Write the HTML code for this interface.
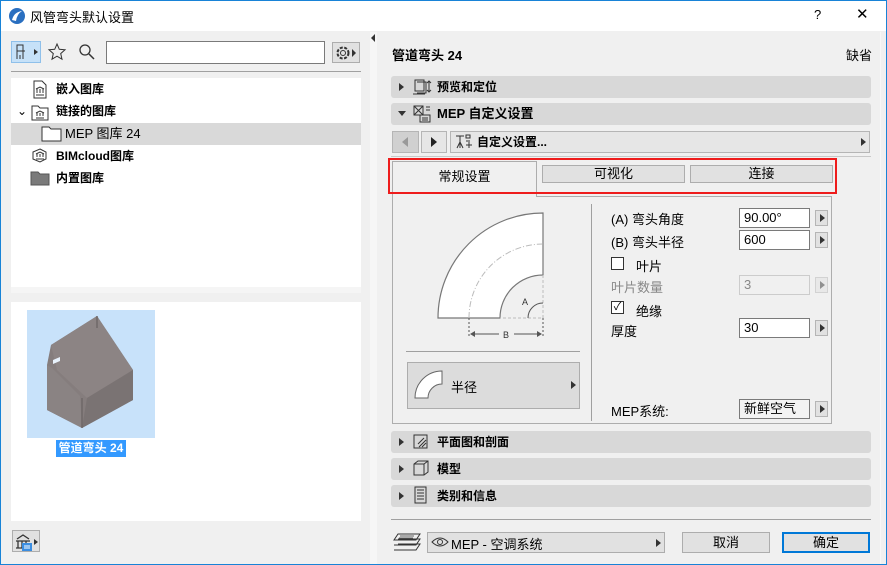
<!DOCTYPE html>
<html><head><meta charset="utf-8"><style>
*{box-sizing:border-box;margin:0;padding:0}
body{width:887px;height:565px;overflow:hidden;background:#f0f0f0;font-family:"Liberation Sans","Noto Sans CJK SC",sans-serif;font-size:12px;color:#000;position:relative}
.a{position:absolute}
.win{left:0;top:0;width:887px;height:565px;border:1px solid #1883d7}
.bar{left:1px;top:1px;width:885px;height:30px;background:#fff}
.sec{background:#d8d8d8;border-radius:3px;height:22px;font-weight:bold;font-size:12px;line-height:22px}
.tri{width:0;height:0;border-top:4px solid transparent;border-bottom:4px solid transparent;border-left:5px solid #333}
.inp{background:#fff;border:1px solid #7a7a7a;height:20px;line-height:18px;padding-left:4px;font-size:13px}
.ab{width:13px;height:16px;background:#e1e1e1;border:1px solid #b5b5b5}
.ab:after{content:"";position:absolute;left:4px;top:3px;border-top:4px solid transparent;border-bottom:4px solid transparent;border-left:5px solid #333}
.btn{background:#e1e1e1;border:1px solid #adadad;text-align:center;line-height:19px;font-size:12px}
.tree div{position:absolute;left:0;height:22px;line-height:22px;font-weight:bold}
</style></head><body>
<div class="a win"></div>
<div class="a bar"></div>
<svg class="a" style="left:8px;top:7px" width="18" height="18"><circle cx="9" cy="9" r="8" fill="#2a6fc0"/><path d="M4 13 Q6 5 14 4 Q9 7 8 14Z" fill="#fff"/></svg>
<div class="a" style="left:30px;top:7px;font-size:13px">风管弯头默认设置</div>
<div class="a" style="left:814px;top:7px;font-size:13px">?</div>
<div class="a" style="left:856px;top:5px;font-size:15px">✕</div>

<!-- left toolbar -->
<div class="a" style="left:11px;top:41px;width:30px;height:22px;background:#c6e1f8;border:1px solid #8fc0ea"></div>
<svg class="a" style="left:14px;top:43px" width="26" height="18"><path d="M3 2h6v6h-6zM3 8v8M9 8v8M3 8h8M6 12v4" stroke="#333" fill="none"/><path d="M20 6l4 3-4 3z" fill="#333"/></svg>
<svg class="a" style="left:47px;top:42px" width="20" height="20"><path d="M10 2l2.3 5.3 5.7.5-4.3 3.8 1.3 5.6-5-3-5 3 1.3-5.6L2 7.8l5.7-.5z" stroke="#333" fill="none"/></svg>
<svg class="a" style="left:78px;top:43px" width="18" height="18"><circle cx="7" cy="7" r="5" stroke="#333" fill="none" stroke-width="1.3"/><path d="M11 11l5 5" stroke="#333" stroke-width="1.5"/></svg>
<div class="a" style="left:106px;top:41px;width:219px;height:23px;background:#fff;border:1px solid #7a7a7a"></div>
<div class="a" style="left:332px;top:42px;width:28px;height:21px;background:#e1e1e1;border:1px solid #adadad"></div>
<svg class="a" style="left:334px;top:44px" width="24" height="18"><circle cx="9" cy="9" r="5.5" stroke="#333" fill="none" stroke-dasharray="3 1.5" stroke-width="2"/><circle cx="9" cy="9" r="2.5" stroke="#333" fill="none"/><path d="M18 5l4 4-4 4z" fill="#333"/></svg>
<div class="a" style="left:11px;top:71px;width:350px;height:1px;background:#a0a0a0"></div>

<!-- tree -->
<div class="a tree" style="left:11px;top:78px;width:350px;height:209px;background:#fff">
 <div style="top:0;left:0;width:350px"><span style="position:absolute;left:45px">嵌入图库</span></div>
 <div style="top:22px;left:0;width:350px"><span style="position:absolute;left:6px;font-weight:normal">⌄</span><span style="position:absolute;left:45px">链接的图库</span></div>
 <div style="top:45px;left:0;width:350px;height:22px;background:#d9d9d9;font-weight:normal;font-size:13px"><span style="position:absolute;left:54px">MEP 图库 24</span></div>
 <div style="top:67px;left:0;width:350px"><span style="position:absolute;left:45px">BIMcloud图库</span></div>
 <div style="top:89px;left:0;width:350px"><span style="position:absolute;left:45px">内置图库</span></div>
</div>
<svg class="a" style="left:30px;top:80px" width="20" height="120">
 <path d="M4 1h8l4 4v13H4z" stroke="#333" fill="#fff"/><path d="M6 15h8M7 13V9M10 13V9M13 13V9M6 9l4-2 4 2" stroke="#333" fill="none"/>
 <path d="M2 26h6l2 2h8v12H2z" stroke="#333" fill="#fff"/><path d="M6 38h8M7 36v-3M10 36v-3M13 36v-3M6 33l4-2 4 2" stroke="#333" fill="none"/>
 <path d="M10 69l6 3v7l-6 3-7-3v-7z" stroke="#333" fill="#fff"/><path d="M6 79h8M7 77v-3M10 77v-3M13 77v-3M6 74l4-2 4 2" stroke="#333" fill="none"/>
 <path d="M1 92h7l2 2h9v11H1z" fill="#7a7a7a" stroke="#555"/>
</svg>
<svg class="a" style="left:41px;top:126px" width="22" height="16"><path d="M1 1h7l2 2h10v12H1z" stroke="#333" fill="#fff"/></svg>

<div class="a" style="left:11px;top:287px;width:350px;height:6px;background:#f5f5f5"></div>
<div class="a" style="left:11px;top:302px;width:350px;height:219px;background:#fff"></div>
<div class="a" style="left:27px;top:310px;width:128px;height:128px;background:#c8e2fa"></div>
<svg class="a" style="left:27px;top:310px" width="128" height="128">
 <path d="M24 35L70 6 106 60 106 90 55 118 20 100 20 55Z" fill="#857d7d"/>
 <path d="M24 35L70 6 106 60 60 88 30 60Z" fill="#8c8484"/>
 <path d="M60 88L106 60 106 90 55 118Z" fill="#7a7373"/>
 <path d="M20 55l5 3 28 28 2 32-35-18z" fill="#8a8383"/>
 <path d="M26 50l7-3v4l-7 3z" fill="#e8f2fc"/>
 <path d="M70 6v12M55 88v30" stroke="#6f6868" stroke-width="1.5"/>
</svg>
<div class="a" style="left:56px;top:440px;width:70px;height:17px;background:#3399ff;color:#fff;font-weight:bold;font-size:12px;line-height:17px;text-align:center">管道弯头 24</div>
<div class="a" style="left:12px;top:530px;width:28px;height:22px;background:#e1e1e1;border:1px solid #adadad"></div>
<svg class="a" style="left:14px;top:532px" width="26" height="20"><path d="M2 9h14M3 7l6-4 6 4M4 9v7M8 9v7M12 9v7M2 16h12" stroke="#333" fill="none" stroke-width="1.3"/><rect x="8" y="11" width="10" height="8" fill="#3b8de0"/><path d="M10 14h6M10 16h6" stroke="#fff"/><path d="M20 7l4 3-4 3z" fill="#333"/></svg>

<!-- divider -->
<div class="a" style="left:370px;top:32px;width:7px;height:532px;background:#f6f6f6"></div>
<div class="a" style="left:371px;top:34px;border-top:4px solid transparent;border-bottom:4px solid transparent;border-right:4px solid #333"></div>
<div class="a" style="left:880px;top:32px;width:1px;height:532px;background:#f7f7f7"></div>

<!-- right -->
<div class="a" style="left:392px;top:45px;font-weight:bold;font-size:13px">管道弯头 24</div>
<div class="a" style="left:846px;top:45px;font-size:13px">缺省</div>
<div class="a sec" style="left:391px;top:76px;width:480px"></div>
<div class="a tri" style="left:399px;top:83px"></div>
<svg class="a" style="left:412px;top:78px" width="20" height="18"><path d="M3 2h9v11H3zM5 4h9v11H5M1 16h12" stroke="#333" fill="none"/><path d="M17 3v11M15 5l2-2 2 2M15 12l2 2 2-2" stroke="#333" fill="none"/></svg>
<div class="a" style="left:437px;top:76px;line-height:22px;font-weight:bold">预览和定位</div>
<div class="a sec" style="left:391px;top:103px;width:480px"></div>
<div class="a" style="left:398px;top:111px;border-left:4px solid transparent;border-right:4px solid transparent;border-top:5px solid #333"></div>
<svg class="a" style="left:412px;top:104px" width="20" height="20"><path d="M2 2h9v9H2zM2 2l9 9M11 2l-9 9" stroke="#333" fill="none"/><path d="M8 11h10v7H8zM10 14h6M10 16h6M14 3h4M14 6h4" stroke="#333" fill="none"/></svg>
<div class="a" style="left:437px;top:103px;line-height:22px;font-weight:bold;font-size:13px">MEP 自定义设置</div>

<div class="a" style="left:392px;top:131px;width:27px;height:22px;background:#d0d0d0;border:1px solid #b5b5b5"></div>
<div class="a" style="left:402px;top:137px;border-top:5px solid transparent;border-bottom:5px solid transparent;border-right:6px solid #999"></div>
<div class="a" style="left:421px;top:131px;width:26px;height:22px;background:#e6e6e6;border:1px solid #b5b5b5"></div>
<div class="a" style="left:431px;top:137px;border-top:5px solid transparent;border-bottom:5px solid transparent;border-left:6px solid #222"></div>
<div class="a" style="left:450px;top:131px;width:420px;height:22px;background:#e6e6e6;border:1px solid #b5b5b5"></div>
<svg class="a" style="left:454px;top:133px" width="20" height="18"><path d="M2 3h8M6 3v12M3 15l3-6 3 6M12 2h4v3h-4zM12 8h4M12 12h6M15 9v6" stroke="#333" fill="none"/></svg>
<div class="a" style="left:477px;top:131px;line-height:22px;font-weight:bold">自定义设置...</div>
<div class="a" style="left:861px;top:138px;border-top:4px solid transparent;border-bottom:4px solid transparent;border-left:5px solid #333"></div>
<div class="a" style="left:391px;top:156px;width:480px;height:1px;background:#c8c8c8"></div>

<!-- tabs -->
<div class="a" style="left:392px;top:196px;width:440px;height:228px;border:1px solid #adadad;background:#f0f0f0"></div>
<div class="a" style="left:392px;top:161px;width:145px;height:36px;background:#f0f0f0;border:1px solid #adadad;border-bottom:none;text-align:center;line-height:30px;font-size:13px">常规设置</div>
<div class="a" style="left:542px;top:165px;width:143px;height:18px;background:#e1e1e1;border:1px solid #adadad;text-align:center;line-height:16px;font-size:13px">可视化</div>
<div class="a" style="left:690px;top:165px;width:143px;height:18px;background:#e1e1e1;border:1px solid #adadad;text-align:center;line-height:16px;font-size:13px">连接</div>
<div class="a" style="left:388px;top:158px;width:449px;height:36px;border:2px solid #ee1c1c"></div>

<!-- elbow drawing -->
<svg class="a" style="left:430px;top:200px" width="120" height="145">
 <path d="M8 118A105 105 0 0 1 113 13V75A43 43 0 0 0 70 118Z" fill="#fff" stroke="#777" stroke-width="1.2"/>
 <path d="M39 118A74 74 0 0 1 113 44" fill="none" stroke="#bbb" stroke-dasharray="6 2 1 2"/>
 <path d="M113 75v43H70" fill="none" stroke="#bbb" stroke-dasharray="3 2"/>
 <path d="M98 118A15 15 0 0 1 113 103" fill="none" stroke="#555"/>
 <path d="M39 118v20M113 118v20" stroke="#555" stroke-dasharray="2 2"/>
 <path d="M41 134h28M84 134h27" stroke="#555"/><path d="M40 134l5-3v6zM112 134l-5-3v6z" fill="#555"/>
 <text x="73" y="138" font-size="9" font-family="Liberation Sans" fill="#333">B</text>
 <text x="92" y="105" font-size="9" font-family="Liberation Sans" fill="#333">A</text>
</svg>
<div class="a" style="left:406px;top:351px;width:174px;height:1px;background:#a0a0a0"></div>
<div class="a" style="left:407px;top:362px;width:173px;height:47px;background:#dcdcdc;border:1px solid #adadad"></div>
<svg class="a" style="left:413px;top:369px" width="34" height="34"><path d="M2 29A27 27 0 0 1 29 2V15A14 14 0 0 0 15 29Z" fill="#fff" stroke="#666"/></svg>
<div class="a" style="left:451px;top:377px;font-size:13px">半径</div>
<div class="a" style="left:571px;top:381px;border-top:4px solid transparent;border-bottom:4px solid transparent;border-left:5px solid #333"></div>
<div class="a" style="left:591px;top:204px;width:1px;height:217px;background:#a0a0a0"></div>

<!-- fields -->
<div class="a" style="left:611px;top:209px;font-size:13px">(A) 弯头角度</div>
<div class="a inp" style="left:739px;top:208px;width:71px">90.00°</div><div class="a ab" style="left:815px;top:210px"></div>
<div class="a" style="left:611px;top:232px;font-size:13px">(B) 弯头半径</div>
<div class="a inp" style="left:739px;top:230px;width:71px">600</div><div class="a ab" style="left:815px;top:232px"></div>
<div class="a" style="left:611px;top:257px;width:13px;height:13px;border:1px solid #333;background:#fff"></div>
<div class="a" style="left:636px;top:256px;font-size:13px">叶片</div>
<div class="a" style="left:611px;top:277px;font-size:13px;color:#888">叶片数量</div>
<div class="a inp" style="left:739px;top:275px;width:71px;background:#f0f0f0;border-color:#ccc;color:#888">3</div>
<div class="a ab" style="left:815px;top:277px;opacity:.5"></div>
<div class="a" style="left:611px;top:301px;width:13px;height:13px;border:1px solid #333;background:#fff;font-size:11px;line-height:11px;text-align:center">✓</div>
<div class="a" style="left:636px;top:301px;font-size:13px">绝缘</div>
<div class="a" style="left:611px;top:321px;font-size:13px">厚度</div>
<div class="a inp" style="left:739px;top:318px;width:71px">30</div><div class="a ab" style="left:815px;top:320px"></div>
<div class="a" style="left:611px;top:401px;font-size:13px">MEP系统:</div>
<div class="a inp" style="left:739px;top:399px;width:71px;background:#f3f3f3">新鲜空气</div><div class="a ab" style="left:815px;top:401px"></div>

<!-- lower sections -->
<div class="a sec" style="left:391px;top:431px;width:480px"></div>
<div class="a tri" style="left:399px;top:438px"></div>
<svg class="a" style="left:412px;top:433px" width="18" height="18"><rect x="2" y="2" width="13" height="13" stroke="#333" fill="none"/><path d="M7 14L14 7M10 14l4-4M6 11l6-6" stroke="#333"/></svg>
<div class="a" style="left:437px;top:431px;line-height:22px;font-weight:bold">平面图和剖面</div>
<div class="a sec" style="left:391px;top:458px;width:480px"></div>
<div class="a tri" style="left:399px;top:465px"></div>
<svg class="a" style="left:412px;top:459px" width="18" height="18"><path d="M2 5l4-3h10v11l-4 3H2zM2 5h10v11M12 5l4-3" stroke="#333" fill="none"/></svg>
<div class="a" style="left:437px;top:458px;line-height:22px;font-weight:bold">模型</div>
<div class="a sec" style="left:391px;top:485px;width:480px"></div>
<div class="a tri" style="left:399px;top:492px"></div>
<svg class="a" style="left:412px;top:486px" width="18" height="18"><path d="M3 1h11v16H3zM5 4h7M5 7h7M5 10h7M5 13h7" stroke="#333" fill="none"/></svg>
<div class="a" style="left:437px;top:485px;line-height:22px;font-weight:bold">类别和信息</div>
<div class="a" style="left:391px;top:519px;width:480px;height:1px;background:#a0a0a0"></div>

<svg class="a" style="left:392px;top:531px" width="30" height="22"><path d="M6 3h22l-4 6H2zM6 8h22l-4 6H2M6 13h22l-4 6H2" stroke="#333" fill="none"/><path d="M8 5h14M7 7h14" stroke="#333" stroke-width=".7"/></svg>
<div class="a" style="left:427px;top:532px;width:238px;height:21px;background:#e1e1e1;border:1px solid #adadad"></div>
<svg class="a" style="left:431px;top:536px" width="18" height="12"><path d="M1 6Q9-2 17 6Q9 14 1 6Z" stroke="#333" fill="none"/><circle cx="9" cy="6" r="2.5" stroke="#333" fill="none"/></svg>
<div class="a" style="left:451px;top:534px;font-size:13px">MEP - 空调系统</div>
<div class="a" style="left:656px;top:539px;border-top:4px solid transparent;border-bottom:4px solid transparent;border-left:5px solid #333"></div>
<div class="a btn" style="left:682px;top:532px;width:88px;height:21px;font-size:13px">取消</div>
<div class="a btn" style="left:782px;top:532px;width:88px;height:21px;border:2px solid #0078d7;line-height:17px;font-size:13px">确定</div>
</body></html>
